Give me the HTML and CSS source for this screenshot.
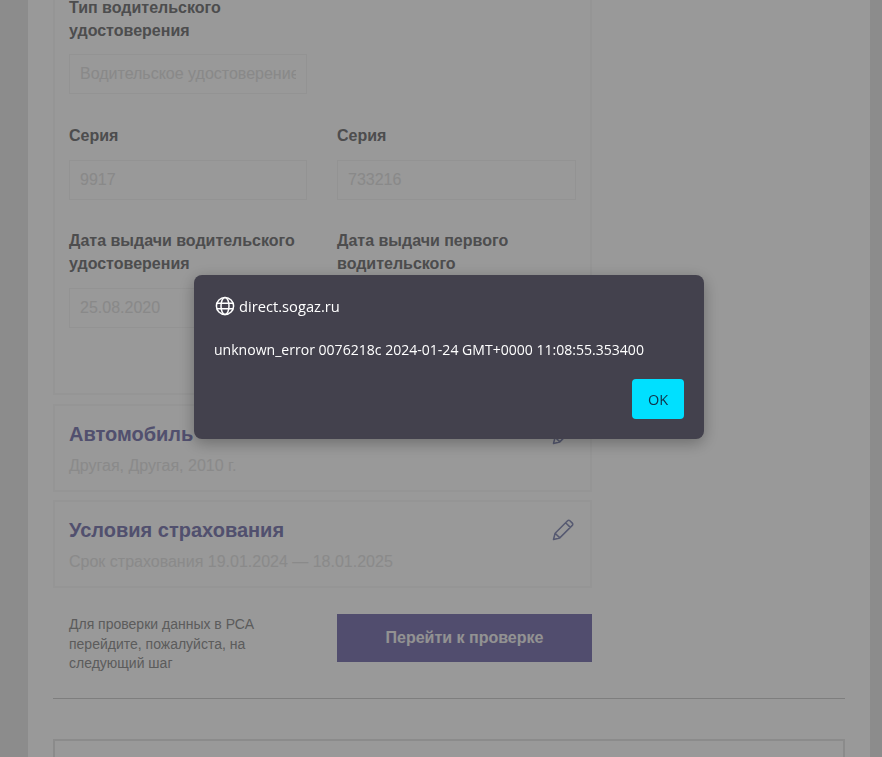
FILE: index.html
```html
<!DOCTYPE html>
<html lang="ru">
<head>
<meta charset="utf-8">
<title>direct.sogaz.ru</title>
<link rel="stylesheet" href="styles.css">
</head>
<body>
<main class="page">
  <div class="layout">
    <section class="panel panel-form">
      <div class="form-grid">
        <div class="field field-first">
          <label class="label">Тип водительского удостоверения</label>
          <input class="input" disabled value="Водительское удостоверение">
        </div>
        <div class="field field-first"></div>
        <div class="field">
          <label class="label">Серия</label>
          <input class="input" disabled value="9917">
        </div>
        <div class="field">
          <label class="label">Серия</label>
          <input class="input" disabled value="733216">
        </div>
        <div class="field">
          <label class="label">Дата выдачи водительского удостоверения</label>
          <input class="input" disabled value="25.08.2020">
        </div>
        <div class="field">
          <label class="label">Дата выдачи первого водительского удостоверения</label>
          <input class="input" disabled value="25.08.2020">
        </div>
      </div>
    </section>
    <section class="panel panel-row">
      <div>
        <h2 class="panel-title">Автомобиль</h2>
        <p class="panel-sub">Другая, Другая, 2010 г.</p>
      </div>
      <svg class="pencil" viewBox="0 0 22 22" aria-hidden="true"><path d="M1.5 20.5l1.6-6.3L15.6 1.7a1.6 1.6 0 0 1 2.3 0l2.4 2.4a1.6 1.6 0 0 1 0 2.3L7.8 18.9zM3.1 14.2l4.7 4.7M13.6 3.7l4.7 4.7"/></svg>
    </section>
    <section class="panel panel-row">
      <div>
        <h2 class="panel-title">Условия страхования</h2>
        <p class="panel-sub">Срок страхования 19.01.2024 — 18.01.2025</p>
      </div>
      <svg class="pencil" viewBox="0 0 22 22" aria-hidden="true"><path d="M1.5 20.5l1.6-6.3L15.6 1.7a1.6 1.6 0 0 1 2.3 0l2.4 2.4a1.6 1.6 0 0 1 0 2.3L7.8 18.9zM3.1 14.2l4.7 4.7M13.6 3.7l4.7 4.7"/></svg>
    </section>
    <div class="next-step">
      <p class="note">Для проверки данных в РСА перейдите, пожалуйста, на следующий шаг</p>
      <button class="primary" type="button">Перейти к проверке</button>
    </div>
  </div>
  <hr class="divider">
  <div class="bottom-box"></div>
</main>
<div class="overlay"></div>
<div class="dialog" role="alertdialog">
  <div class="dialog-origin">
    <svg class="globe" viewBox="0 0 20 20" aria-hidden="true"><circle cx="10" cy="10" r="8.6"/><ellipse cx="10" cy="10" rx="4" ry="8.6"/><path d="M1.8 7.2h16.4M1.8 12.8h16.4"/></svg>
    <span>direct.sogaz.ru</span>
  </div>
  <p class="dialog-text">unknown_error 0076218c 2024-01-24 GMT+0000 11:08:55.353400</p>
  <div class="dialog-actions"><button class="ok" type="button">OK</button></div>
</div>
</body>
</html>
```
FILE: styles.css
```css
* { box-sizing: border-box; }
html, body { margin: 0; height: 757px; overflow: hidden; }
body { background: #eaeaea; font-family: "Liberation Sans", Arial, sans-serif; color: #333; }
.page { width: 842px; height: 800px; margin: -20px 0 0 28px; padding: 0 25px; background: #fff; overflow: hidden; }
.layout { width: 539px; display: flex; flex-direction: column; }
.panel { border: 2px solid #f8f8f8; }
.panel-form { height: 415px; padding: 0 14px; margin-bottom: 9px; }
.form-grid { display: grid; grid-template-columns: 238px 239px; column-gap: 30px; }
.field { display: flex; flex-direction: column; padding-top: 14px; padding-bottom: 15px; }
.label { font-size: 16px; line-height: 23px; font-weight: 700; margin-bottom: 13px; color: #808082; }
.field-first { padding-bottom: 16px; }
.field-first .label { margin-bottom: 12px; }
.input { width: 100%; height: 40px; padding: 0 10px; border: 1px solid #f6f6f6; background: #fff; font: 16px "Liberation Sans", Arial, sans-serif; color: #e4e4e4; }
.panel-row { height: 88px; padding: 14px 14px 0; display: flex; justify-content: space-between; margin-bottom: 8px; }
.panel-title { margin: 0; font-size: 20px; line-height: 28px; font-weight: 700; color: #8885b8; }
.panel-sub { margin: 7px 0 0; font-size: 16px; line-height: 22px; color: #e6e6e6; }
.pencil { width: 22px; height: 22px; margin: 3px 2px 0 0; fill: none; stroke: #8f95bc; stroke-width: 1.5; stroke-linejoin: round; }
.next-step { display: grid; grid-template-columns: 268px 255px; padding-left: 16px; margin-top: 18px; }
.note { margin: 0; font-size: 14px; line-height: 19.5px; color: #999; padding-top: 1px; width: 205px; }
.primary { height: 48px; border: 0; background: #8781b8; color: #f4f4f4; font: 700 16px "Liberation Sans", Arial, sans-serif; }
.divider { margin: 24px 0 0; border: 0; border-top: 1px solid #d2d2d2; }
.bottom-box { height: 80px; margin-top: 40px; border: 2px solid #e8e8e8; }
.overlay { position: fixed; inset: 0; background: rgba(0, 0, 0, .4); }
.dialog { position: fixed; left: 194px; top: 275px; width: 510px; height: 164px; padding: 20px; background: #43414d; border-radius: 8px; box-shadow: 0 4px 16px rgba(0, 0, 0, .3); color: #fff; font-family: "Open Sans", "Noto Sans", sans-serif; font-size: 14px; }
.dialog-origin { display: flex; align-items: center; gap: 4px; height: 22px; padding-left: 1px; }
.dialog-origin span { font-size: 14.7px; }
.globe { width: 20px; height: 20px; fill: none; stroke: #fff; stroke-width: 1.5; }
.dialog-text { margin: 23px 0 0; line-height: 20px; font-size: 14.05px; }
.dialog-actions { display: flex; justify-content: flex-end; margin-top: 19px; }
.ok { width: 52px; height: 40px; border: 0; border-radius: 4px; background: #00e0ff; color: #10334a; font: 14.5px "Open Sans", "Noto Sans", sans-serif; }
```
